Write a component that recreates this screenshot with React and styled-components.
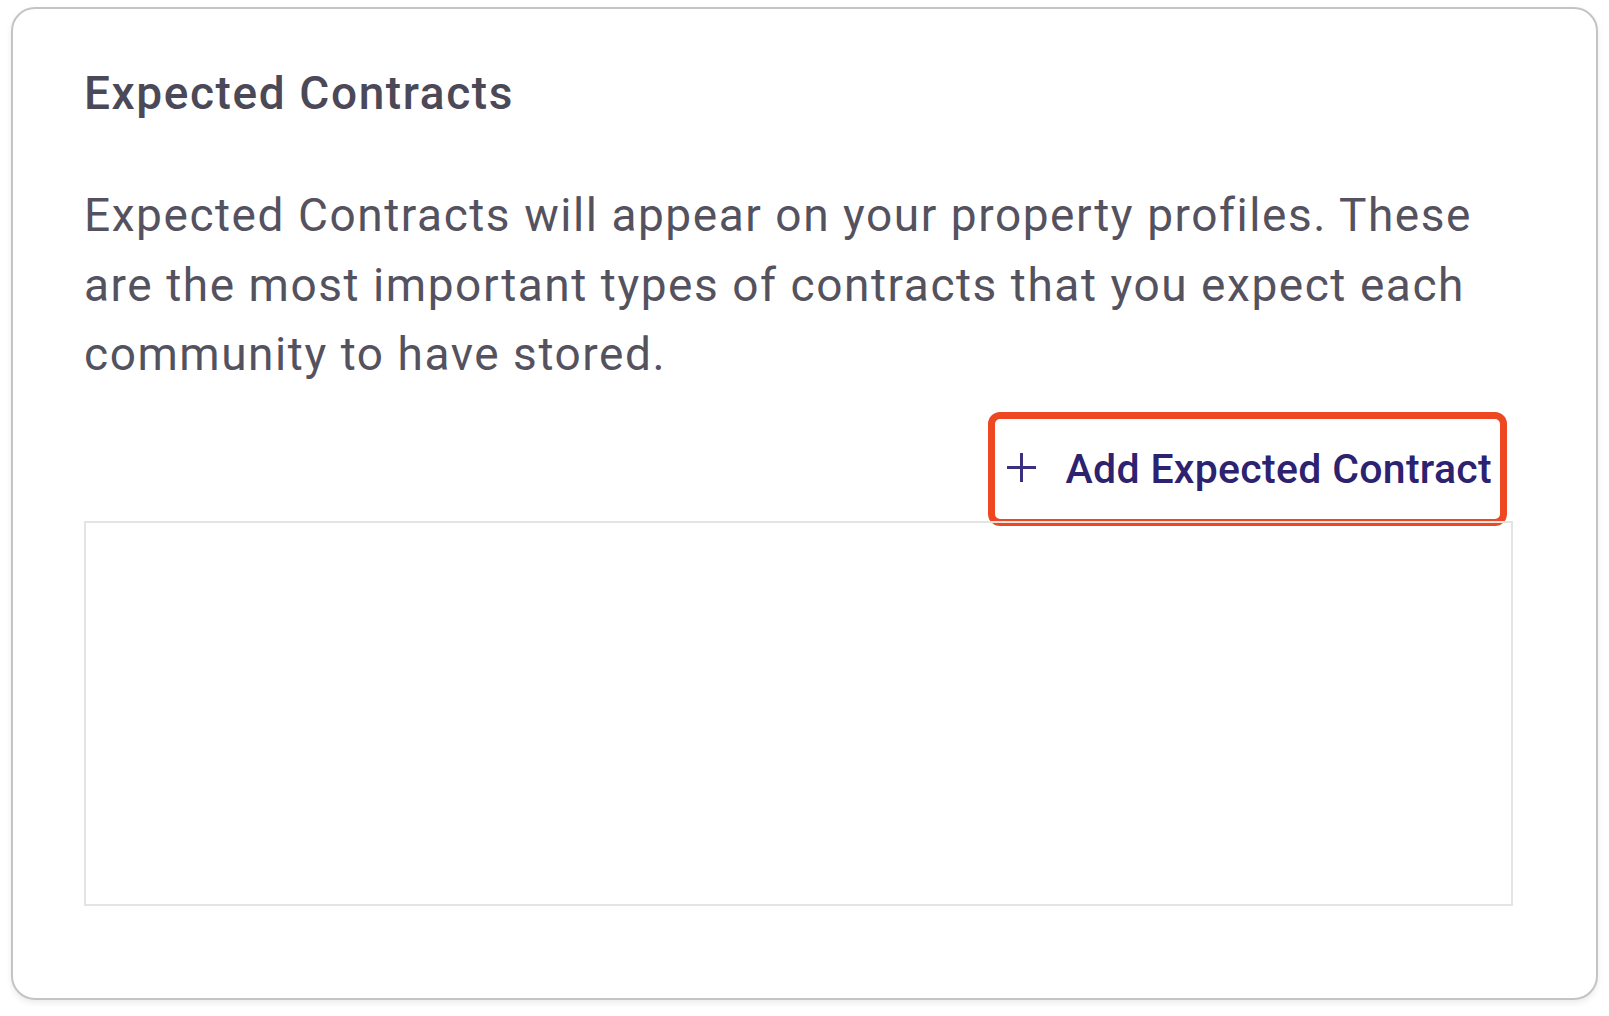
import React from 'react';
import styled, { createGlobalStyle } from 'styled-components';

const GlobalStyle = createGlobalStyle`
	body {
		margin: 0;
		background: #ffffff;
		font-family: Roboto, 'Liberation Sans', sans-serif;
	}
	* {
		box-sizing: border-box;
	}
`;

const Card = styled.section`
	margin: 7px 11px;
	width: 1587px;
	height: 993px;
	border: 2px solid #c4c4c4;
	border-radius: 24px;
	background: #ffffff;
	box-shadow: 0 3px 6px rgba(0, 0, 0, 0.08);
	padding: 57px 83px 0 71px;
	display: flex;
	flex-direction: column;
`;

const Title = styled.h2`
	margin: 0;
	font-size: 46px;
	line-height: 55px;
	font-weight: 500;
	letter-spacing: 1.6px;
	color: #4b4858;
`;

const Description = styled.p`
	margin: 60px 0 0;
	font-size: 46px;
	line-height: 69.5px;
	font-weight: 400;
	letter-spacing: 1.55px;
	color: #55525f;
`;

const Actions = styled.div`
	display: flex;
	justify-content: flex-end;
	margin-top: 29px;
	padding-right: 13px;
`;

const AddButton = styled.button`
	display: inline-flex;
	align-items: center;
	gap: 30px;
	height: 100px;
	padding: 0 8px 0 12px;
	border: none;
	border-radius: 5px;
	background: transparent;
	outline: 7px solid #ee4822;
	font-family: Roboto, 'Liberation Sans', sans-serif;
	font-size: 41px;
	font-weight: 500;
	letter-spacing: 0.3px;
	color: #2d2270;
	cursor: pointer;
	svg {
		flex: none;
		margin-top: -2px;
	}
`;

const ContractList = styled.div`
	margin-top: 2px;
	height: 385px;
	border: 2px solid #e4e4e4;
`;

const PlusIcon = () => (
	<svg width="29" height="29" viewBox="0 0 29 29" fill="none">
		<path d="M14.5 0v29M0 14.5h29" stroke="#3b3080" strokeWidth="3" />
	</svg>
);

export default function App() {
	return (
		<>
			<GlobalStyle />
			<Card>
				<Title>Expected Contracts</Title>
				<Description>
					Expected Contracts will appear on your property profiles. These are the most important types of contracts that you expect each community to have stored.
				</Description>
				<Actions>
					<AddButton>
						<PlusIcon />
						Add Expected Contract
					</AddButton>
				</Actions>
				<ContractList />
			</Card>
		</>
	);
}
